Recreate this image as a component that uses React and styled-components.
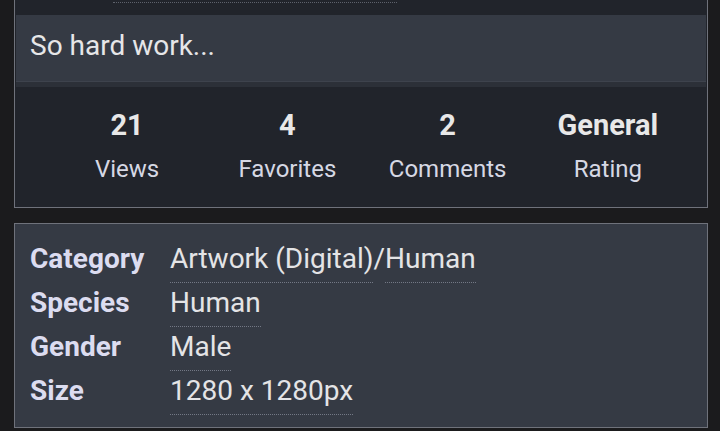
import styled, { createGlobalStyle } from "styled-components";

const GlobalStyle = createGlobalStyle`
  html, body {
    margin: 0;
    padding: 0;
    background: #1b1b1d;
    font-family: Roboto, "Liberation Sans", Arial, sans-serif;
  }
`;

const stats = [
  { value: "21", label: "Views" },
  { value: "4", label: "Favorites" },
  { value: "2", label: "Comments" },
  { value: "General", label: "Rating" },
];

const info = [
  { label: "Category", links: ["Artwork (Digital)", "Human"] },
  { label: "Species", links: ["Human"] },
  { label: "Gender", links: ["Male"] },
  { label: "Size", links: ["1280 x 1280px"] },
];

export default function App() {
  return (
    <>
      <GlobalStyle />
      <Page>
        <Panel>
          <TopStrip>
            <Trail />
          </TopStrip>
          <Description>
            <p>So hard work...</p>
          </Description>
          <Stats>
            {stats.map((s) => (
              <Stat key={s.label}>
                <StatValue>{s.value}</StatValue>
                <StatLabel>{s.label}</StatLabel>
              </Stat>
            ))}
          </Stats>
        </Panel>
        <InfoPanel>
          {info.map((row) => (
            <InfoRow key={row.label}>
              <InfoLabel>{row.label}</InfoLabel>
              <InfoValue>
                {row.links.map((l, i) => (
                  <span key={l}>
                    {i > 0 && "/"}
                    <InfoLink>{l}</InfoLink>
                  </span>
                ))}
              </InfoValue>
            </InfoRow>
          ))}
        </InfoPanel>
      </Page>
    </>
  );
}

const Page = styled.div`
  width: 694px;
  margin-left: 14px;
  display: flex;
  flex-direction: column;
  gap: 15px;
`;

const Panel = styled.section`
  background: #21242b;
  border: 1px solid #6f727b;
  border-top: none;
`;

const TopStrip = styled.div`
  height: 15px;
  padding-left: 98px;
`;

const Trail = styled.div`
  width: 284px;
  height: 2px;
  border-bottom: 1px dotted #5d616b;
`;

const Description = styled.div`
  margin: 0 1px;
  background: #353a44;
  border-bottom: 1px solid #3e434d;
  box-shadow: 0 5px 0 #2c3038;
  margin-bottom: 5px;

  p {
    margin: 0;
    height: 66px;
    padding-left: 14px;
    font-size: 28px;
    line-height: 62px;
    color: #e6e6e8;
  }
`;

const Stats = styled.div`
  display: grid;
  grid-template-columns: repeat(4, 1fr);
  padding: 18px 19px 14px 32px;
`;

const Stat = styled.div`
  display: flex;
  flex-direction: column;
  align-items: center;
`;

const StatValue = styled.div`
  font-size: 29px;
  font-weight: 700;
  line-height: 40px;
  color: #e8e8e8;
`;

const StatLabel = styled.div`
  font-size: 24px;
  line-height: 48px;
  color: #d6d8e4;
`;

const InfoPanel = styled.section`
  background: #353a44;
  border: 1px solid #6f727b;
  padding: 19px 15px 8px;
  display: flex;
  flex-direction: column;
`;

const InfoRow = styled.div`
  display: grid;
  grid-template-columns: 140px 1fr;
  height: 44px;
  align-items: baseline;
  line-height: 32px;
`;

const InfoLabel = styled.div`
  font-size: 28px;
  font-weight: 700;
  color: #dcdcf0;
`;

const InfoValue = styled.div`
  font-size: 28px;
  color: #e4e4e6;
`;

const InfoLink = styled.span`
  display: inline-block;
  padding-bottom: 7px;
  border-bottom: 1px dotted #737885;
`;
